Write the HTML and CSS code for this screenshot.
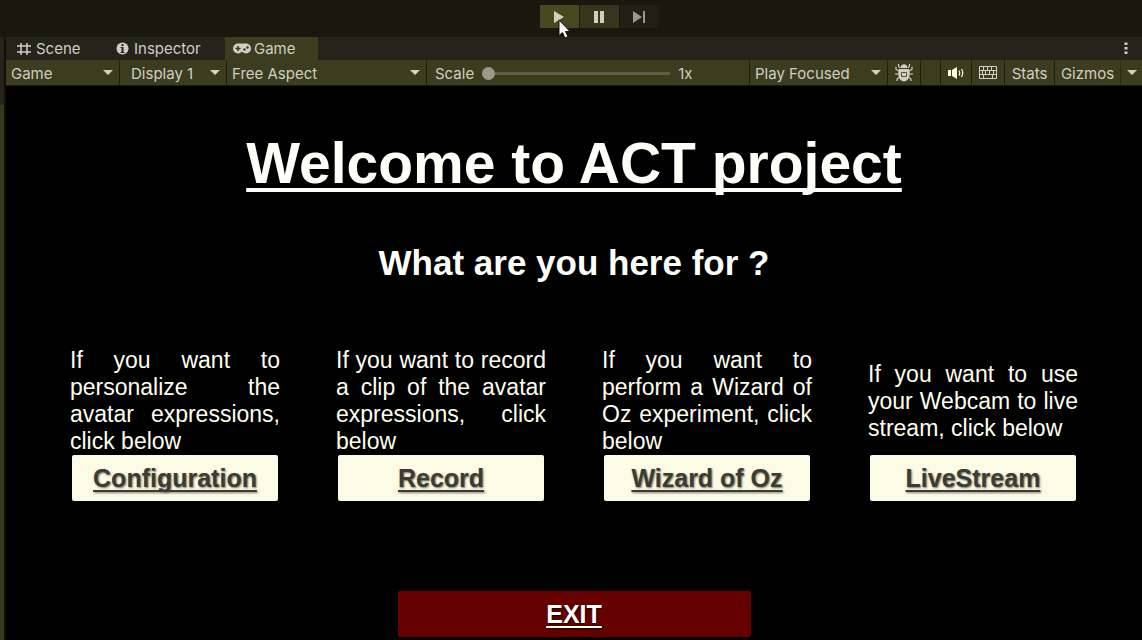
FILE: index.html
```html
<!DOCTYPE html>
<html lang="en">
<head>
<meta charset="utf-8">
<meta name="viewport" content="width=device-width, initial-scale=1">
<title>ACT project</title>
<link rel="stylesheet" href="styles.css">
</head>
<body>
<div class="editor">
  <header class="playbar">
    <button class="play-btn active" type="button" aria-label="Play">
      <svg width="12" height="14" viewBox="0 0 12 14"><path d="M1 1L11 7L1 13Z" fill="currentColor"/></svg>
      <svg class="cursor" width="13" height="21" viewBox="0 0 13 21"><path d="M1 1V16.500L4.500 13.500L7 19L10 17.500L7.500 12.500H12Z" fill="#fff" stroke="#111" stroke-width="1"/></svg>
    </button>
    <button class="play-btn pause" type="button" aria-label="Pause">
      <svg width="12" height="14" viewBox="0 0 12 14"><path d="M1 1H5V13H1ZM7 1H11V13H7Z" fill="currentColor"/></svg>
    </button>
    <button class="play-btn step" type="button" aria-label="Step">
      <svg width="14" height="14" viewBox="0 0 14 14"><path d="M1 1L10 7L1 13ZM11 1H13V13H11Z" fill="currentColor"/></svg>
    </button>
  </header>
  <div class="workspace">
    <div class="dock-edge"></div>
    <div class="panel">
      <nav class="tabs">
        <button class="tab tab-scene" type="button">
          <svg width="14" height="14" viewBox="0 0 14 14"><path d="M4 1V13M10 1V13M0 4H14M0 10H14" stroke="currentColor" stroke-width="1.500" fill="none"/></svg>Scene
        </button>
        <button class="tab tab-inspector" type="button">
          <svg width="13" height="13" viewBox="0 0 13 13"><circle cx="6.500" cy="6.500" r="6" fill="currentColor"/><path d="M5.500 2H7.500V4H5.500ZM4.500 5H7.500V10H8.500V11H4.500V10H5.500V6H4.500Z" fill="#24241a"/></svg>Inspector
        </button>
        <button class="tab tab-game selected" type="button">
          <svg width="18" height="11" viewBox="0 0 18 11"><path d="M5 .5H13A5 5 0 0 1 13 10.500C11 10.500 10.500 9 9 9S7 10.500 5 10.500A5 5 0 0 1 5 .5Z" fill="currentColor"/><path d="M5 3V8M2.500 5.500H7.500" stroke="#38381c" stroke-width="1.500"/><circle cx="11.500" cy="6.500" r="1.200" fill="#38381c"/><circle cx="14.500" cy="4.500" r="1.200" fill="#38381c"/></svg>Game
        </button>
        <button class="menu" type="button" aria-label="Panel menu">
          <svg width="4" height="13" viewBox="0 0 4 13"><path d="M.5 .5H3.500V3H.5ZM.5 5H3.500V7.500H.5ZM.5 9.500H3.500V12H.5Z" fill="currentColor"/></svg>
        </button>
      </nav>
      <div class="toolbar">
        <div class="drop drop-view"><select aria-label="View"><option>Game</option></select></div>
        <div class="drop drop-display"><select aria-label="Display"><option>Display 1</option></select></div>
        <div class="drop drop-aspect"><select aria-label="Aspect"><option>Free Aspect</option></select></div>
        <div class="scale">
          <label for="scale">Scale</label>
          <input id="scale" type="range" min="1" max="5" step="0.1" value="1">
          <output for="scale">1x</output>
        </div>
        <div class="drop drop-focus"><select aria-label="Play mode"><option>Play Focused</option></select></div>
        <button class="tool tool-bug" type="button" aria-label="Debug">
          <svg width="18" height="19" viewBox="0 0 18 19"><path d="M5 5L3.500 3V1M13 5L14.500 3V1M4 8L1 6.500V4M14 8L17 6.500V4M4 11H0M14 11H18M5 14L2 16V18M13 14L16 16V18" stroke="currentColor" stroke-width="1.200" fill="none"/><path d="M5.500 5C5.500 0 12.500 0 12.500 5ZM4 6H14C16 12 14 18 9 18.500C4 18 2 12 4 6Z" fill="currentColor"/><path d="M6.500 9.500H11.500V13.500H6.500Z" stroke="#55553c" fill="none"/></svg>
        </button>
        <div class="spacer"></div>
        <button class="tool tool-audio" type="button" aria-label="Mute audio">
          <svg width="16" height="12" viewBox="0 0 16 12"><path d="M0 3H3V9H0ZM4 3L9 0V12L4 9Z" fill="#ffffe8"/><path d="M11 3.500Q12.500 6 11 8.500M13.500 2Q16 6 13.500 10" stroke="#ffffe8" stroke-width="1.200" fill="none"/></svg>
        </button>
        <button class="tool tool-keys" type="button" aria-label="Keyboard shortcuts">
          <svg width="18" height="13" viewBox="0 0 18 13"><path d="M.5 .5H17.500V12.500H.5ZM.5 4.500H17.500M.5 8.500H17.500M4.500 .5V4.500M8.500 .5V4.500M12.500 .5V4.500M3.500 4.500V8.500M6.500 4.500V8.500M10.500 4.500V8.500M14.500 4.500V8.500M4.500 8.500V12.500M13.500 8.500V12.500" stroke="currentColor" fill="none"/></svg>
        </button>
        <button class="tool tool-stats" type="button">Stats</button>
        <button class="tool tool-gizmos" type="button">Gizmos</button>
        <button class="tool tool-more" type="button" aria-label="Gizmo options"><span class="arrow"></span></button>
      </div>
      <main class="stage">
        <h1 class="title">Welcome to ACT project</h1>
        <h2 class="question">What are you here for ?</h2>
        <div class="choices">
          <section class="choice">
            <p class="hint">If you want to personalize the avatar expressions, click below</p>
            <button class="go" type="button">Configuration</button>
          </section>
          <section class="choice">
            <p class="hint">If you want to record a clip of the avatar expressions, click below</p>
            <button class="go" type="button">Record</button>
          </section>
          <section class="choice">
            <p class="hint">If you want to perform a Wizard of Oz experiment, click below</p>
            <button class="go" type="button">Wizard of Oz</button>
          </section>
          <section class="choice">
            <p class="hint">If you want to use your Webcam to live stream, click below</p>
            <button class="go" type="button">LiveStream</button>
          </section>
        </div>
        <button class="exit" type="button">EXIT</button>
      </main>
    </div>
  </div>
</div>
</body>
</html>
```
FILE: styles.css
```css
* { box-sizing: border-box; }

body {
  margin: 0;
  background: #000;
  color: #cfcfc4;
  font-family: Inter, "Liberation Sans", sans-serif;
  font-size: 15px;
}

button, select {
  border: 0;
  border-radius: 0;
  padding: 0;
  margin: 0;
  background: none;
  color: inherit;
  font: inherit;
}

svg { display: block; flex: none; }

.editor {
  display: flex;
  flex-direction: column;
  min-height: 100vh;
}

/* Play controls */
.playbar {
  display: flex;
  justify-content: center;
  align-items: flex-start;
  gap: 1px;
  height: 37px;
  padding: 5px 0 0 56px;
  background: #18180f;
}

.play-btn {
  position: relative;
  display: flex;
  align-items: center;
  justify-content: center;
  width: 39px;
  height: 23px;
  background: #36361c;
}

.play-btn.active { background: #49491f; }
.play-btn.step { background: #1f1f16; color: #98988e; }

.cursor {
  position: absolute;
  left: 18px;
  top: 14px;
  z-index: 1;
}

.workspace { display: flex; flex: 1; }

.dock-edge {
  width: 6px;
  background: linear-gradient(#24241a 68px, #38381c 68px);
  border-right: 2px solid #101008;
}

.panel {
  display: flex;
  flex: 1;
  flex-direction: column;
  min-width: 0;
}

/* Tabs */
.tabs {
  display: flex;
  height: 23px;
  background: #24241a;
}

.tab {
  display: flex;
  align-items: center;
  gap: 5px;
  white-space: nowrap;
}

.tab-scene { width: 99px; padding-left: 11px; }
.tab-inspector { width: 120px; padding-left: 11px; }
.tab-game { width: 93px; padding-left: 8px; gap: 3px; }
.tab.selected { background: #3c3c1e; }

.menu {
  display: flex;
  align-items: center;
  margin-left: auto;
  padding-right: 14px;
}

/* Toolbar */
.toolbar {
  display: flex;
  height: 26px;
  background: #3c3c1e;
  border-bottom: 1px solid #1c1c10;
}

.drop {
  position: relative;
  border-right: 1px solid #202012;
}

.drop select {
  appearance: none;
  width: 100%;
  height: 100%;
  padding: 2px 20px 0 5px;
}

.drop::after, .arrow {
  border: 5px solid transparent;
  border-top-color: #d2d2c6;
  border-bottom: 0;
}

.drop::after {
  content: "";
  position: absolute;
  right: 6px;
  top: 10px;
  pointer-events: none;
}

.drop-view { width: 114px; }
.drop-display { width: 107px; }
.drop-display select { padding-left: 11px; }
.drop-aspect { width: 200px; }
.drop-focus { width: 138px; }

.scale {
  display: flex;
  flex: 1;
  align-items: center;
  padding: 2px 0 0 8px;
  border-right: 1px solid #202012;
}

.scale input {
  appearance: none;
  width: 188px;
  height: 14px;
  margin: 0 8px;
  background: linear-gradient(#5e5e4c, #5e5e4c) center / 100% 3px no-repeat;
}

.scale input::-webkit-slider-thumb {
  appearance: none;
  width: 13px;
  height: 13px;
  border-radius: 50%;
  background: #9a9a8c;
}

.tool {
  display: flex;
  align-items: center;
  justify-content: center;
  border-right: 1px solid #202012;
}

.tool-bug { width: 33px; }
.spacer { width: 20px; border-right: 1px solid #202012; }
.tool-audio { width: 31px; }
.tool-keys { width: 33px; }
.tool-stats { width: 50px; padding-top: 2px; }
.tool-gizmos { width: 66px; padding-top: 2px; border-right-color: #2c2c18; }
.tool-more { width: 21px; border-right: 0; }

/* Game view */
.stage {
  display: flex;
  flex: 1;
  flex-direction: column;
  align-items: center;
  padding: 45px 64px 3px;
  background: #000;
  color: #fffffa;
  font-family: "Liberation Sans", Arial, sans-serif;
}

.title {
  margin: 0;
  font-size: 57px;
  line-height: 64px;
  text-decoration: underline 4px;
  text-decoration-skip-ink: none;
  text-underline-offset: 5px;
}

.question {
  margin: 48px 0 0;
  font-size: 35px;
  line-height: 40px;
}

.choices {
  display: grid;
  grid-template-columns: repeat(4, 1fr);
  gap: 56px;
  width: 100%;
  margin-top: 64px;
}

.choice {
  display: flex;
  flex-direction: column;
}

.hint {
  margin: auto 0;
  color: #fffff0;
  font-size: 23px;
  line-height: 27px;
  text-align: justify;
}

.go, .exit {
  height: 46px;
  border-radius: 2px;
  font-size: 25px;
  font-weight: bold;
  text-decoration: underline 2px;
  text-decoration-skip-ink: none;
  text-underline-offset: 3px;
}

.go {
  margin: 0 2px;
  background: #fbfbe6;
  color: #3c3c34;
  text-shadow: 1px 1px 2px #77776a;
}

.exit {
  width: 353px;
  max-width: 100%;
  margin-top: 90px;
  background: #660000;
  color: #fffffa;
  text-shadow: 1px 1px 2px #000;
}
```
